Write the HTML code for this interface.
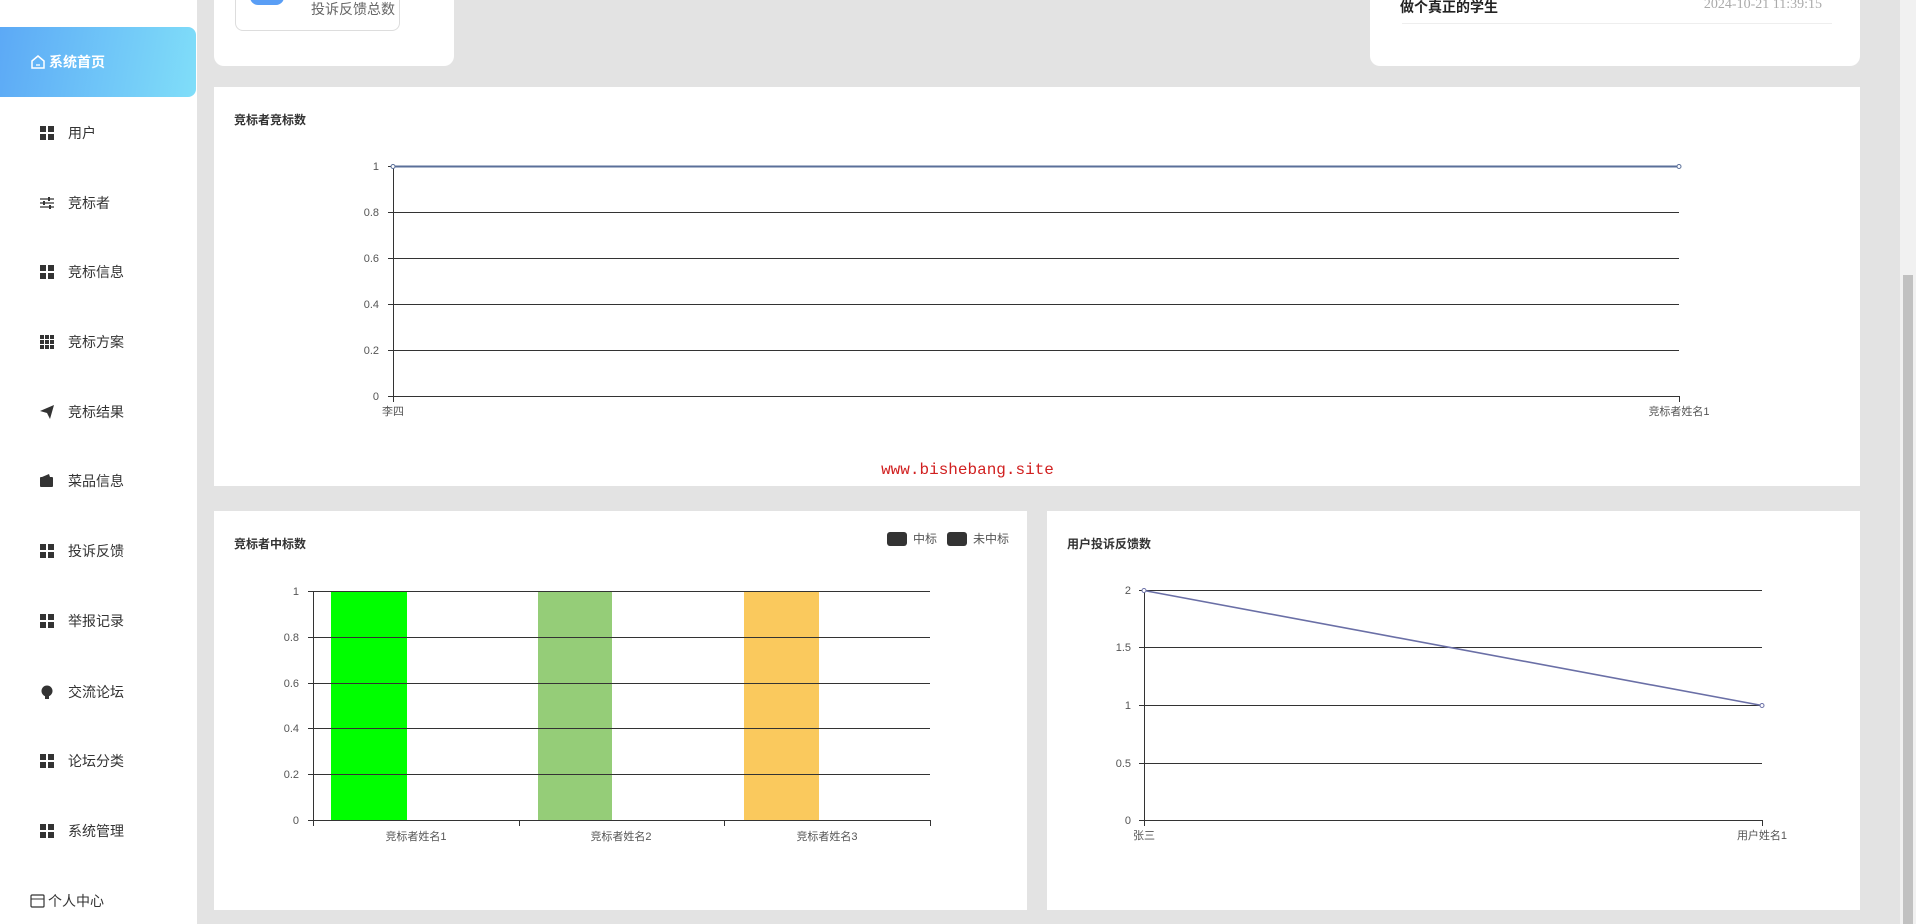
<!DOCTYPE html>
<html><head><meta charset="utf-8"><style>
*{margin:0;padding:0;box-sizing:border-box}
body{width:1916px;height:924px;overflow:hidden;background:#e3e3e3;font-family:"Liberation Sans","Noto Sans CJK SC",sans-serif;position:relative;color:#333}
.side{position:absolute;left:0;top:0;width:197px;height:924px;background:#fff}
.active{position:absolute;left:0;top:27px;width:196px;height:70px;border-radius:0 8px 8px 0;background:linear-gradient(100deg,#5ca9f6,#80def9);color:#fff;font-size:14px;font-weight:bold;display:flex;align-items:center;padding-left:30px}
.mi{position:absolute;left:40px;font-size:14px;color:#333;display:flex;align-items:center;height:20px}
.mi i{display:inline-block;width:14px;height:14px;margin-right:14px;position:relative}
.g4{background:
linear-gradient(#333,#333) 0 0/6px 6px no-repeat,linear-gradient(#333,#333) 8px 0/6px 6px no-repeat,
linear-gradient(#333,#333) 0 8px/6px 6px no-repeat,linear-gradient(#333,#333) 8px 8px/6px 6px no-repeat}
.card{position:absolute;background:#fff}
.t{position:absolute;font-size:12px;font-weight:bold;color:#333}
svg text{font-family:"Liberation Sans","Noto Sans CJK SC",sans-serif;font-size:11px;fill:#555}
</style></head><body>
<div class="side">
<div class="active"><svg width="16" height="16" viewBox="0 0 16 16" style="margin-right:3px"><path d="M2 7 L8 2 L14 7 V14 H2 Z" fill="none" stroke="#fff" stroke-width="1.5"/><path d="M6 11 H10" stroke="#fff" stroke-width="1.3"/></svg>系统首页</div>
<div class="mi" style="top:123px"><i class="g4"></i>用户</div>
<div class="mi" style="top:193px"><i><svg width="14" height="14"><path d="M0 3H14M0 7H14M0 11H14" stroke="#333" stroke-width="1.3"/><rect x="8" y="1" width="2" height="4" fill="#333"/><rect x="3" y="5" width="2" height="4" fill="#333"/><rect x="9" y="9" width="2" height="4" fill="#333"/></svg></i>竞标者</div>
<div class="mi" style="top:262px"><i class="g4"></i>竞标信息</div>
<div class="mi" style="top:332px"><i><svg width="14" height="14"><g fill="#333"><rect x="0" y="0" width="4" height="4"/><rect x="5" y="0" width="4" height="4"/><rect x="10" y="0" width="4" height="4"/><rect x="0" y="5" width="4" height="4"/><rect x="5" y="5" width="4" height="4"/><rect x="10" y="5" width="4" height="4"/><rect x="0" y="10" width="4" height="4"/><rect x="5" y="10" width="4" height="4"/><rect x="10" y="10" width="4" height="4"/></g></svg></i>竞标方案</div>
<div class="mi" style="top:402px"><i><svg width="14" height="14"><path d="M0 6 L14 0 L10 14 L7 8 Z" fill="#333"/></svg></i>竞标结果</div>
<div class="mi" style="top:471px"><i><svg width="14" height="14"><rect x="0" y="3" width="13" height="10" rx="1" fill="#333"/><path d="M2 3 L9 0 L10 3" fill="#333"/></svg></i>菜品信息</div>
<div class="mi" style="top:541px"><i class="g4"></i>投诉反馈</div>
<div class="mi" style="top:611px"><i class="g4"></i>举报记录</div>
<div class="mi" style="top:682px"><i><svg width="14" height="14"><circle cx="7" cy="6" r="5.5" fill="#333"/><rect x="5" y="11" width="4" height="3" fill="#333"/></svg></i>交流论坛</div>
<div class="mi" style="top:751px"><i class="g4"></i>论坛分类</div>
<div class="mi" style="top:821px"><i class="g4"></i>系统管理</div>
<div class="mi" style="top:891px;left:30px"><svg width="15" height="14" style="margin-right:3px"><rect x="1" y="1" width="13" height="12" rx="1" fill="none" stroke="#333" stroke-width="1.2"/><path d="M1 5H14" stroke="#333"/></svg>个人中心</div>
</div>

<div class="card" style="left:214px;top:0;width:240px;height:66px;border-radius:0 0 10px 10px">
<div style="position:absolute;left:21px;top:-10px;width:165px;height:41px;border:1px solid #ddd;border-radius:8px">
<div style="position:absolute;left:14px;top:0;width:34px;height:14px;background:#5a9ef5;border-radius:0 0 8px 8px"></div>
<div style="position:absolute;left:75px;top:8px;font-size:14px;color:#666">投诉反馈总数</div></div>
</div>
<div class="card" style="left:1370px;top:0;width:490px;height:66px;border-radius:0 0 10px 10px">
<div style="position:absolute;left:30px;top:-3px;font-size:14px;font-weight:bold;color:#222">做个真正的学生</div>
<div style="position:absolute;right:38px;top:-3px;font-size:14px;color:#aaa;font-family:'Liberation Serif',serif">2024-10-21 11:39:15</div>
<div style="position:absolute;left:32px;right:28px;top:23px;border-top:1px solid #eee"></div>
</div>
<div style="position:absolute;left:1900px;top:0;width:16px;height:924px;background:#f1f1f1"></div>
<div style="position:absolute;left:1903px;top:275px;width:10px;height:649px;background:#c1c1c1"></div>

<div class="card" style="left:214px;top:87px;width:1646px;height:399px">
<div class="t" style="left:20px;top:24px">竞标者竞标数</div>
<svg width="1646" height="399" style="position:absolute;left:0;top:0">
<g stroke="#333" stroke-width="1">
<path d="M179 79.5H1465M179 125.5H1465M179 171.5H1465M179 217.5H1465M179 263.5H1465"/>
<path d="M179.5 79V315M174 79.5H179M174 125.5H179M174 171.5H179M174 217.5H179M174 263.5H179M174 309.5H179"/>
<path d="M179 309.5H1465M179.5 309V315M1465.5 309V315"/></g>
<path d="M179 79.5H1465" stroke="#5a6f99" stroke-width="2"/>
<circle cx="179" cy="79.5" r="2" fill="#fff" stroke="#5a6f99"/><circle cx="1465" cy="79.5" r="2" fill="#fff" stroke="#5a6f99"/>
<g text-anchor="end"><text x="165" y="83">1</text><text x="165" y="129">0.8</text><text x="165" y="175">0.6</text><text x="165" y="221">0.4</text><text x="165" y="267">0.2</text><text x="165" y="313">0</text></g>
<text x="179" y="328" text-anchor="middle">李四</text><text x="1465" y="328" text-anchor="middle">竞标者姓名1</text>
</svg>
<div style="position:absolute;left:0;width:1507px;text-align:center;top:374px;font-family:'Liberation Mono',monospace;font-size:16px;color:#d12020">www.bishebang.site</div>
</div>

<div class="card" style="left:214px;top:511px;width:813px;height:399px">
<div class="t" style="left:20px;top:24px">竞标者中标数</div>
<div style="position:absolute;left:673px;top:19px;font-size:12px;color:#555;display:flex;align-items:center">
<span style="width:20px;height:14px;background:#333;border-radius:3px;margin-right:6px"></span>中标
<span style="width:20px;height:14px;background:#333;border-radius:3px;margin:0 6px 0 10px"></span>未中标</div>
<svg width="813" height="399" style="position:absolute;left:0;top:0">
<rect x="117" y="80" width="76" height="229" fill="#00ff00"/>
<rect x="324" y="80" width="74" height="229" fill="#95cd78"/>
<rect x="530" y="80" width="75" height="229" fill="#fac95d"/>
<g stroke="#333" stroke-width="1">
<path d="M99 80.5H716M99 126.5H716M99 172.5H716M99 217.5H716M99 263.5H716"/>
<path d="M99.5 80V309M94 80.5H99M94 126.5H99M94 172.5H99M94 217.5H99M94 263.5H99M94 309.5H99"/>
<path d="M99 309.5H716M99.5 309V315M305.5 309V315M510.5 309V315M716.5 309V315"/></g>
<g text-anchor="end"><text x="85" y="84">1</text><text x="85" y="130">0.8</text><text x="85" y="176">0.6</text><text x="85" y="221">0.4</text><text x="85" y="267">0.2</text><text x="85" y="313">0</text></g>
<text x="202" y="329" text-anchor="middle">竞标者姓名1</text><text x="407" y="329" text-anchor="middle">竞标者姓名2</text><text x="613" y="329" text-anchor="middle">竞标者姓名3</text>
</svg></div>

<div class="card" style="left:1047px;top:511px;width:813px;height:399px">
<div class="t" style="left:20px;top:24px">用户投诉反馈数</div>
<svg width="813" height="399" style="position:absolute;left:0;top:0">
<g stroke="#333" stroke-width="1">
<path d="M97 79.5H715M97 136.5H715M97 194.5H715M97 252.5H715"/>
<path d="M97.5 79V315M92 79.5H97M92 136.5H97M92 194.5H97M92 252.5H97M92 309.5H97"/>
<path d="M97 309.5H715M97.5 309V315M715.5 309V315"/></g>
<path d="M97 79.5L715 194.5" stroke="#6a6fa6" stroke-width="1.6"/>
<circle cx="97" cy="79.5" r="2" fill="#fff" stroke="#6a6fa6"/><circle cx="715" cy="194.5" r="2" fill="#fff" stroke="#6a6fa6"/>
<g text-anchor="end"><text x="84" y="83">2</text><text x="84" y="140">1.5</text><text x="84" y="198">1</text><text x="84" y="256">0.5</text><text x="84" y="313">0</text></g>
<text x="97" y="328" text-anchor="middle">张三</text><text x="715" y="328" text-anchor="middle">用户姓名1</text>
</svg></div>
</body></html>
